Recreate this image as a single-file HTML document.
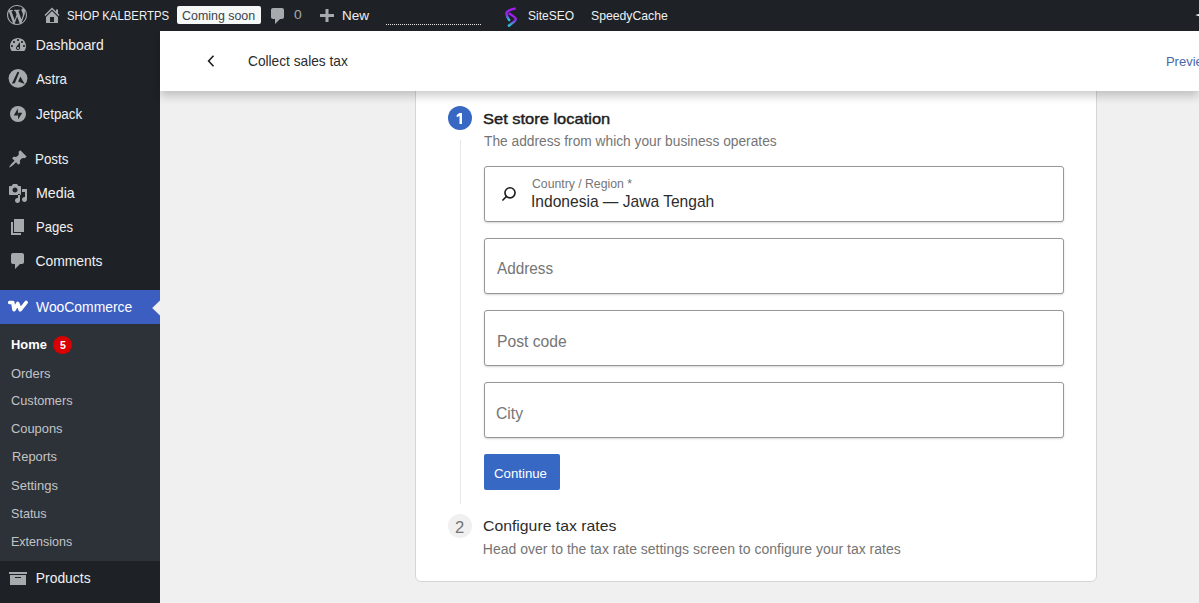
<!DOCTYPE html>
<html><head><meta charset="utf-8">
<style>
*{box-sizing:border-box;margin:0;padding:0}
html,body{width:1199px;height:603px;overflow:hidden;background:#f0f0f0;font-family:"Liberation Sans",sans-serif;position:relative}
.a{position:absolute;white-space:nowrap;line-height:1}
svg{position:absolute;overflow:visible}
#bar{position:absolute;left:0;top:0;width:1199px;height:31px;background:#1e2227;color:#f0f0f1;font-size:12px;z-index:3}
#side{position:absolute;left:0;top:31px;width:160px;height:572px;background:#1e2227;color:#f0f0f1;font-size:13.5px}
#sub{position:absolute;left:0;top:324px;width:160px;height:237px;background:#2c3237}
#woo{position:absolute;left:0;top:290px;width:160px;height:34px;background:#3c5ec0}
#hdr{position:absolute;left:160px;top:31px;width:1039px;height:60px;background:#fff;box-shadow:0 5px 9px rgba(0,0,0,.2);z-index:2}
#card{position:absolute;left:415px;top:40px;width:682px;height:542px;background:#fff;border:1px solid #d6d6d6;border-radius:6px}
.inp{position:absolute;left:484px;width:580px;height:56px;border:1px solid #979797;border-radius:3px;background:#fff;box-shadow:0 1px 2px rgba(0,0,0,.16)}
.ph{font-size:15.5px;color:#757575}
.t{position:absolute;white-space:nowrap;line-height:1;transform-origin:0 0;z-index:10}
</style></head><body>
<div id="bar">
  <!-- WP logo -->
  <svg style="left:7px;top:5px" width="20" height="20" viewBox="0 0 20 20">
    <path fill="#a7aaad" d="M20 10c0-5.51-4.49-10-10-10C4.48 0 0 4.49 0 10c0 5.52 4.48 10 10 10 5.51 0 10-4.48 10-10zM7.78 15.37L4.37 6.22c.55-.02 1.17-.08 1.17-.08.5-.06.44-1.13-.06-1.11 0 0-1.45.11-2.37.11-.18 0-.37 0-.58-.01C4.12 2.69 6.87 1.11 10 1.11c2.33 0 4.45.87 6.05 2.34-.68-.11-1.650.39-1.65 1.58 0 .74.45 1.36.9 2.1.35.61.55 1.360.55 2.46 0 1.49-1.4 5-1.4 5l-3.03-8.37c.54-.02.82-.17.82-.17.5-.05.44-1.25-.06-1.22 0 0-1.44.12-2.38.12-.87 0-2.33-.12-2.33-.12-.5-.03-.56 1.2-.06 1.22l.92.08 1.26 3.41zM17.41 10c.24-.64.74-1.87.43-4.25.7 1.29 1.05 2.71 1.05 4.25 0 3.29-1.73 6.240-4.4 7.78.97-2.59 1.94-5.2 2.92-7.78zM6.1 18.09C3.12 16.65 1.11 13.53 1.11 10c0-1.3.23-2.48.72-3.59C3.25 10.3 4.67 14.2 6.1 18.09zm4.03-6.63l2.58 6.98c-.86.29-1.76.45-2.71.45-.79 0-1.57-.11-2.29-.33.81-2.38 1.62-4.74 2.42-7.1z"/>
  </svg>
  <!-- home -->
  <svg style="left:42px;top:5px" width="20" height="20" viewBox="0 0 20 20">
    <path fill="#a7aaad" d="M16 8.5l1.53 1.53-1.06 1.06L10 4.62l-6.47 6.47-1.06-1.06L10 2.5l4 4v-2h2v4zm-6-2.46l6 5.99V18H4v-5.97zM12 17v-5H8v5h4z"/>
  </svg>
  <div class="a" style="left:177px;top:6px;width:84px;height:18px;background:#f6f7f7;border-radius:2px"></div>
  <!-- comment -->
  <svg style="left:268px;top:6px" width="20" height="20" viewBox="0 0 20 20">
    <path fill="#a7aaad" d="M5 2h9c1.1 0 2 .9 2 2v7c0 1.1-.9 2-2 2h-2l-5 5v-5H5c-1.1 0-2-.9-2-2V4c0-1.1.9-2 2-2z"/>
  </svg>
  <!-- plus -->
  <svg style="left:320px;top:9px" width="14" height="13" viewBox="0 0 14 13">
    <path d="M5.5 0h3v5h5.5v3h-5.5v5h-3v-5h-5.5v-3h5.5z" fill="#a7aaad"/>
  </svg>
  <div class="a" style="left:386px;top:24px;width:96px;height:1px;background:repeating-linear-gradient(90deg,#e6e6e6 0 1px,transparent 1px 2px)"></div>
  <!-- siteseo -->
  <svg style="left:503px;top:7px" width="16" height="21" viewBox="0 0 16 21">
    <defs><linearGradient id="sg" x1="0" y1="0" x2="0" y2="1"><stop offset="0" stop-color="#a21bf5"/><stop offset=".55" stop-color="#8a2be2"/><stop offset="1" stop-color="#27c3d9"/></linearGradient></defs>
    <path d="M11.6 1.6 Q3.4 3.6 3.4 6.6 Q3.6 9.5 6.2 13" fill="none" stroke="url(#sg)" stroke-width="2.5" stroke-linecap="round" stroke-linejoin="round"/>
    <path d="M6.6 6.8 Q12.8 10.6 12.8 12.2 Q12.6 14.2 5.9 18.6" fill="none" stroke="url(#sg)" stroke-width="2.5" stroke-linecap="round" stroke-linejoin="round"/>
  </svg>
  <svg style="left:1195px;top:13px" width="6" height="5" viewBox="0 0 6 5"><path d="M0.3 2 L5 0.6 V3.6Z" fill="#fff"/></svg>
</div>

<div id="side">
  <!-- dashboard -->
  <svg style="left:8px;top:4px" width="20" height="20" viewBox="0 0 20 20">
    <path fill="#a7aaad" fill-rule="evenodd" d="M3.76 16h12.48c1.1-1.37 1.76-3.11 1.76-5 0-4.420-3.58-8-8-8s-8 3.58-8 8c0 1.89.66 3.63 1.76 5zM10 4c.55 0 1 .45 1 1s-.45 1-1 1-1-.45-1-1 .45-1 1-1zM6 6c.55 0 1 .45 1 1s-.45 1-1 1-1-.45-1-1 .45-1 1-1zm8 0c.55 0 1 .45 1 1s-.45 1-1 1-1-.45-1-1 .45-1 1-1zm-5.37 5.55L12 7v6c0 1.1-.9 2-2 2s-2-.9-2-2c0-.57.24-1.08.63-1.45zM4 10c.55 0 1 .45 1 1s-.45 1-1 1-1-.45-1-1 .45-1 1-1zm12 0c.55 0 1 .45 1 1s-.45 1-1 1-1-.45-1-1 .45-1 1-1zm-5 3c0-.55-.45-1-1-1s-1 .45-1 1 .45 1 1 1 1-.45 1-1z"/>
  </svg>
  <!-- astra -->
  <svg style="left:8px;top:37px" width="20" height="20" viewBox="0 0 20 20">
    <circle cx="10" cy="10.3" r="9.4" fill="#a7aaad"/>
    <path d="M9.4 3.9 Q10.3 3.3 11.2 4.4 L6.8 15.2 L3.9 15.6Z" fill="#1e2227"/>
    <path d="M12.3 8.4 L16.7 16.1 L10.2 13.5Z" fill="#1e2227"/>
  </svg>
  <!-- jetpack -->
  <svg style="left:10px;top:75px" width="16" height="16" viewBox="0 0 16 16">
    <circle cx="8" cy="8" r="8" fill="#a7aaad"/>
    <path d="M7.9 2.5 V9.4 H3.7Z M8.1 13.6 V6.8 H12.3Z" fill="#1e2227"/>
  </svg>
  <!-- posts pin -->
  <svg style="left:7.5px;top:118px" width="20" height="20" viewBox="0 0 20 20">
    <path fill="#a7aaad" d="M10.44 3.02l1.82-1.820 6.36 6.35-1.83 1.82c-1.05-.68-2.48-.57-3.41.36l-.75.75c-.92.93-1.04 2.350-.35 3.41l-1.83 1.82-2.41-2.41-2.8 2.79c-.42.42-3.38 2.71-3.8 2.29s1.86-3.39 2.28-3.81l2.79-2.79L4.1 9.36l1.83-1.82c1.05.69 2.48.57 3.4-.36l.75-.75c.93-.92 1.05-2.35.36-3.41z"/>
  </svg>
  <!-- media -->
  <svg style="left:8px;top:152px" width="20" height="20" viewBox="0 0 20 20">
    <path fill="#a7aaad" d="M13 11V4c0-.55-.45-1-1-1h-1.67L9 1H5L3.67 3H2c-.55 0-1 .45-1 1v7c0 .55.45 1 1 1h10c.55 0 1-.45 1-1zM7 4.5c1.38 0 2.5 1.12 2.5 2.5S8.38 9.5 7 9.5 4.5 8.38 4.5 7 5.62 4.5 7 4.5zM14 6h5v10.5c0 1.38-1.12 2.5-2.5 2.5S14 17.88 14 16.5s1.12-2.5 2.5-2.5c.17 0 .34.02.5.05V9h-3V6zm-4 8.05V11h2v6.5c0 1.38-1.12 2.5-2.5 2.5S7 18.88 7 17.5 8.12 15 9.5 15c.17 0 .34.02.5.05z"/>
  </svg>
  <!-- pages -->
  <svg style="left:8px;top:186px" width="20" height="20" viewBox="0 0 20 20">
    <path fill="#a7aaad" d="M6 15V2h10v13H6zm-1 1h8v2H3V5h2v11z"/>
  </svg>
  <!-- comments -->
  <svg style="left:8px;top:220px" width="20" height="20" viewBox="0 0 20 20">
    <path fill="#a7aaad" d="M5 2h9c1.1 0 2 .9 2 2v7c0 1.1-.9 2-2 2h-2l-5 5v-5H5c-1.1 0-2-.9-2-2V4c0-1.1.9-2 2-2z"/>
  </svg>
</div>

<div id="woo">
  <svg style="left:8px;top:10px" width="20" height="12" viewBox="0 0 20 12">
    <path d="M1.6 2.6 H4.8 L6 9.8 L9.8 3.4 L12.2 9.8 L18.2 2.4" fill="none" stroke="#fff" stroke-width="3.5" stroke-linejoin="round" stroke-linecap="round"/>
  </svg>
  <svg style="left:152px;top:10px" width="8" height="16" viewBox="0 0 8 16"><path d="M8.5 0 L0.2 8 L8.5 16Z" fill="#f0f0f0"/></svg>
</div>

<div id="sub">
  <div class="a" style="left:53px;top:11.5px;width:18.6px;height:18.6px;border-radius:50%;background:#d90000"></div>
</div>
<svg style="left:8.3px;top:568px" width="20" height="20" viewBox="0 0 20 20">
  <path fill="#a7aaad" fill-rule="evenodd" d="M19 4v2H1V4h18zM2 7h16v10H2V7zm11 3V9H7v1h6z"/>
</svg>

<div id="card"></div>
<div id="hdr">
  <svg style="left:47px;top:24px" width="8" height="12" viewBox="0 0 8 12"><path d="M6.5 0.8 L1.6 6 L6.5 11.2" fill="none" stroke="#1e1e1e" stroke-width="1.6"/></svg>
</div>

<!-- step 1 -->
<div class="a" style="left:448px;top:106px;width:24px;height:24px;border-radius:12px;background:#3668c4"></div>
<svg style="left:0;top:0;z-index:5" width="1" height="1" viewBox="0 0 1 1"><path d="M459.4 112.9 H462 V124 H459.5 V115.9 L456.7 117.3 V114.9Z" fill="#fff"/></svg>
<div class="a" style="left:460px;top:140px;width:1px;height:364px;background:#e8e8e8"></div>

<div class="inp" style="top:166px">
  <svg style="left:16px;top:19px" width="16" height="16" viewBox="0 0 16 16"><circle cx="9" cy="6.8" r="5.05" fill="none" stroke="#1e1e1e" stroke-width="1.65"/><path d="M5.5 10.4 L1.4 14.5" stroke="#1e1e1e" stroke-width="1.6"/></svg>
</div>
<div class="inp" style="top:238px"></div>
<div class="inp" style="top:310px"></div>
<div class="inp" style="top:382px"></div>

<div class="a" style="left:484px;top:454px;width:76px;height:36px;background:#3668c4;border-radius:2px"></div>

<!-- step 2 -->
<div class="a" style="left:448px;top:514px;width:24px;height:24px;border-radius:12px;background:#f0f0f0"></div>
<span class="t" style="left:67.43px;top:10.34px;font-size:12.95px;color:#f0f0f1;transform:scaleX(0.880)">SHOP KALBERTPS</span>
<span class="t" style="left:182.44px;top:9.91px;font-size:12.95px;color:#3c434a;transform:scaleX(0.960)">Coming soon</span>
<span class="t" style="left:294.44px;top:9.48px;font-size:12.95px;color:#a7aaad;transform:scaleX(1.070)">0</span>
<span class="t" style="left:341.83px;top:9.50px;font-size:12.95px;color:#f0f0f1;transform:scaleX(1.045)">New</span>
<span class="t" style="left:527.54px;top:9.52px;font-size:12.95px;color:#f0f0f1;transform:scaleX(0.927)">SiteSEO</span>
<span class="t" style="left:590.55px;top:9.52px;font-size:12.95px;color:#f0f0f1;transform:scaleX(0.945)">SpeedyCache</span>
<span class="t" style="left:35.78px;top:38.97px;font-size:13.90px;color:#f0f0f1">Dashboard</span>
<span class="t" style="left:36.00px;top:72.52px;font-size:13.90px;color:#f0f0f1;transform:scaleX(0.956)">Astra</span>
<span class="t" style="left:35.76px;top:108.40px;font-size:13.90px;color:#f0f0f1;transform:scaleX(0.965)">Jetpack</span>
<span class="t" style="left:34.89px;top:152.97px;font-size:13.90px;color:#f0f0f1;transform:scaleX(0.961)">Posts</span>
<span class="t" style="left:35.71px;top:186.54px;font-size:13.90px;color:#f0f0f1;transform:scaleX(1.025)">Media</span>
<span class="t" style="left:35.81px;top:220.54px;font-size:13.90px;color:#f0f0f1;transform:scaleX(0.941)">Pages</span>
<span class="t" style="left:35.40px;top:255.44px;font-size:13.90px;color:#f0f0f1">Comments</span>
<span class="t" style="left:36.04px;top:300.56px;font-size:13.90px;color:#ffffff">WooCommerce</span>
<span class="t" style="left:11.28px;top:339.24px;font-size:12.40px;color:#ffffff;font-weight:bold;transform:scaleX(1.040)">Home</span>
<span class="t" style="left:59.61px;top:339.59px;font-size:11.80px;color:#ffffff;font-weight:bold;transform:scaleX(0.898)">5</span>
<span class="t" style="left:11.45px;top:367.65px;font-size:12.40px;color:#c3c4c7;transform:scaleX(1.044)">Orders</span>
<span class="t" style="left:11.46px;top:395.18px;font-size:12.40px;color:#c3c4c7;transform:scaleX(1.027)">Customers</span>
<span class="t" style="left:11.46px;top:422.83px;font-size:12.40px;color:#c3c4c7;transform:scaleX(1.038)">Coupons</span>
<span class="t" style="left:11.83px;top:450.75px;font-size:12.40px;color:#c3c4c7;transform:scaleX(1.037)">Reports</span>
<span class="t" style="left:11.45px;top:479.73px;font-size:12.40px;color:#c3c4c7;transform:scaleX(1.048)">Settings</span>
<span class="t" style="left:11.41px;top:507.83px;font-size:12.40px;color:#c3c4c7;transform:scaleX(1.015)">Status</span>
<span class="t" style="left:11.00px;top:535.75px;font-size:12.40px;color:#c3c4c7;transform:scaleX(1.009)">Extensions</span>
<span class="t" style="left:35.79px;top:572.38px;font-size:13.90px;color:#f0f0f1">Products</span>
<span class="t" style="left:248.23px;top:55.40px;font-size:13.90px;color:#2c2c2c;transform:scaleX(0.987)">Collect sales tax</span>
<span class="t" style="left:1165.92px;top:54.68px;font-size:13.00px;color:#4a67a8">Preview</span>
<span class="t" style="left:483.16px;top:110.88px;font-size:15.55px;color:#1e1e1e;-webkit-text-stroke:0.45px #1e1e1e;transform:scaleX(1.059)">Set store location</span>
<span class="t" style="left:483.77px;top:133.71px;font-size:14.00px;color:#757575;transform:scaleX(0.982)">The address from which your business operates</span>
<span class="t" style="left:531.53px;top:176.56px;font-size:13.00px;color:#757575;transform:scaleX(0.941)">Country / Region *</span>
<span class="t" style="left:531.38px;top:192.50px;font-size:16.20px;color:#2c2c2c;transform:scaleX(0.962)">Indonesia — Jawa Tengah</span>
<span class="t" style="left:497.04px;top:260.18px;font-size:16.10px;color:#757575;transform:scaleX(0.951)">Address</span>
<span class="t" style="left:496.53px;top:332.55px;font-size:16.10px;color:#757575;transform:scaleX(0.973)">Post code</span>
<span class="t" style="left:496.20px;top:405.08px;font-size:16.10px;color:#757575;transform:scaleX(0.974)">City</span>
<span class="t" style="left:494.48px;top:467.20px;font-size:13.60px;color:#ffffff;transform:scaleX(0.973)">Continue</span>
<span class="t" style="left:455.15px;top:519.60px;font-size:15.60px;color:#757575;transform:scaleX(1.068)">2</span>
<span class="t" style="left:483.21px;top:518.45px;font-size:15.55px;color:#2c2c2c;transform:scaleX(1.015)">Configure tax rates</span>
<span class="t" style="left:482.83px;top:542.16px;font-size:14.00px;color:#757575">Head over to the tax rate settings screen to configure your tax rates</span>
</body></html>
